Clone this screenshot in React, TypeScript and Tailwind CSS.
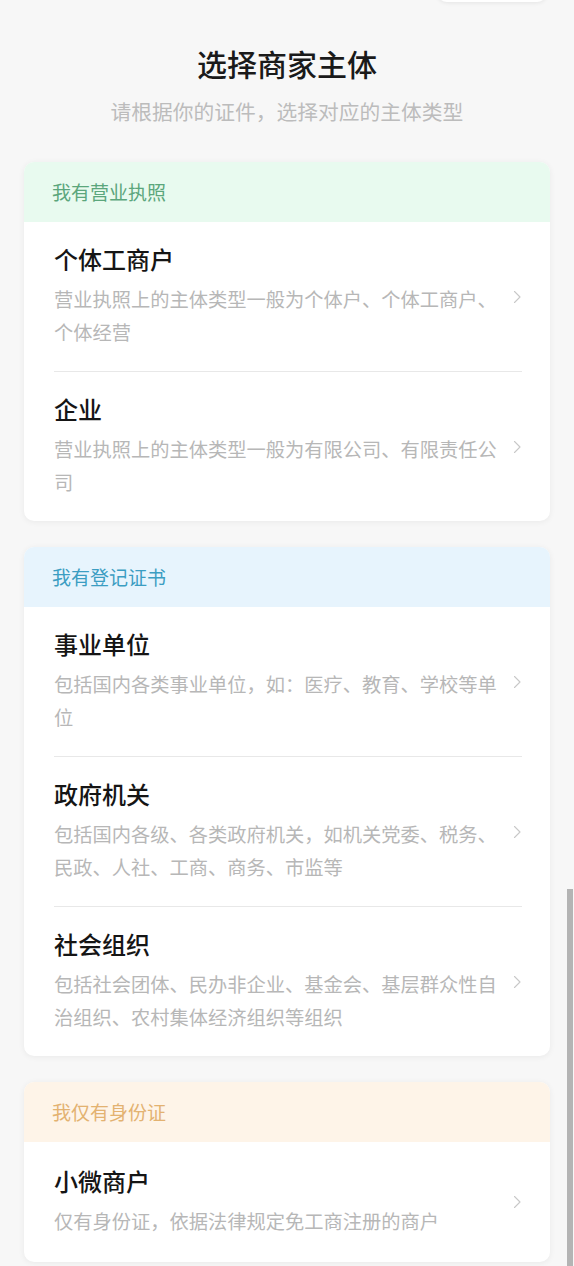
import React from 'react';

type Item = { title: string; desc: string };
type Group = { label: string; headerBg: string; headerText: string; items: Item[] };

const groups: Group[] = [
  {
    label: '我有营业执照',
    headerBg: 'bg-[#e8faef]',
    headerText: 'text-[#5ba67c]',
    items: [
      { title: '个体工商户', desc: '营业执照上的主体类型一般为个体户、个体工商户、个体经营' },
      { title: '企业', desc: '营业执照上的主体类型一般为有限公司、有限责任公司' },
    ],
  },
  {
    label: '我有登记证书',
    headerBg: 'bg-[#e7f4fd]',
    headerText: 'text-[#3b9dc2]',
    items: [
      { title: '事业单位', desc: '包括国内各类事业单位，如：医疗、教育、学校等单位' },
      { title: '政府机关', desc: '包括国内各级、各类政府机关，如机关党委、税务、民政、人社、工商、商务、市监等' },
      { title: '社会组织', desc: '包括社会团体、民办非企业、基金会、基层群众性自治组织、农村集体经济组织等组织' },
    ],
  },
  {
    label: '我仅有身份证',
    headerBg: 'bg-[#fef4e8]',
    headerText: 'text-[#e3b271]',
    items: [{ title: '小微商户', desc: '仅有身份证，依据法律规定免工商注册的商户' }],
  },
];

const Chevron = () => (
  <svg width="10" height="14" viewBox="0 0 10 14" fill="none" className="shrink-0">
    <path d="M2.5 1.5 L8 7 L2.5 12.5" stroke="#c8c8c8" strokeWidth="1.1" strokeLinecap="round" strokeLinejoin="round" />
  </svg>
);

const GroupCard = ({ group }: { group: Group }) => (
  <div className="bg-white rounded-[10px] shadow-[0_1px_6px_rgba(0,0,0,0.06)] overflow-hidden">
    <div className={`h-[60px] flex items-center pl-[28px] text-[19px] ${group.headerBg} ${group.headerText}`}>
      {group.label}
    </div>
    <div className="pl-[30px] pr-[28px]">
      {group.items.map((item, i) => (
        <div
          key={item.title}
          className={`min-h-[120px] flex items-center gap-[12px] pt-[22px] pb-[22px] ${i > 0 ? 'border-t border-[#e8e8e8]' : ''}`}
        >
          <div className="flex-1">
            <div className="text-[24px] leading-[30px] font-medium text-[#151515]">{item.title}</div>
            <div className="mt-[9px] text-[19.25px] leading-[33px] text-[#b7b7b7]">{item.desc}</div>
          </div>
          <Chevron />
        </div>
      ))}
    </div>
  </div>
);

export default function App() {
  return (
    <div
      className="relative min-h-screen bg-[#f7f7f7] overflow-hidden"
      style={{ fontFamily: '"Noto Sans CJK SC", "Noto Sans", sans-serif' }}
    >
      <div className="flex justify-end pr-[27px]">
        <div className="-mt-[38px] h-10 w-[110px] rounded-[10px] bg-white shadow-[0_1px_4px_rgba(0,0,0,0.08)]" />
      </div>

      <div className="pt-[41px] text-center">
        <h1 className="text-[30px] leading-[40px] font-medium text-[#1a1a1a]">选择商家主体</h1>
        <p className="mt-[14px] text-[20.75px] leading-[28px] text-[#bcbcbc]">请根据你的证件，选择对应的主体类型</p>
      </div>

      <div className="mt-[37px] px-[24px] flex flex-col gap-[26px] pb-[6px]">
        {groups.map((g) => (
          <GroupCard key={g.label} group={g} />
        ))}
      </div>

      <div className="absolute right-[1px] top-[889px] bottom-0 w-[6px] bg-[#b4b4b4]" />
    </div>
  );
}
